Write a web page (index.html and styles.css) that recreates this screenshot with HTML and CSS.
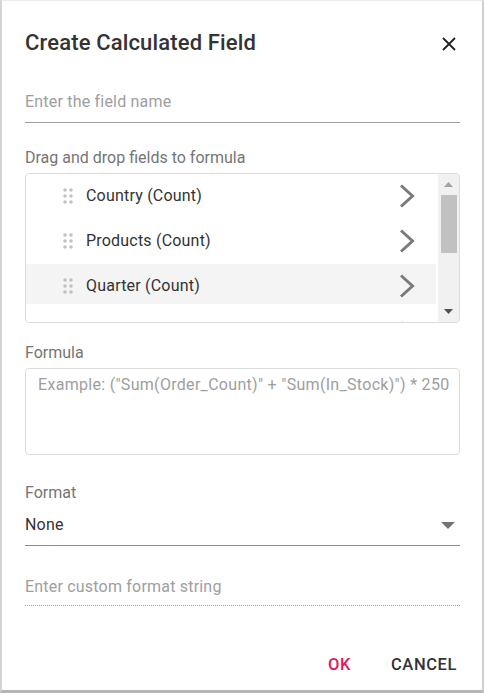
FILE: index.html
```html
<!DOCTYPE html>
<html>
<head>
<meta charset="utf-8">
<link rel="stylesheet" href="styles.css">
</head>
<body>
<div class="dialog">
  <div class="header">
    <div class="title">Create Calculated Field</div>
    <svg class="close" width="14" height="14" viewBox="0 0 14 14"><path d="M1 1L13 13M13 1L1 13" stroke="#212121" stroke-width="1.8" fill="none"/></svg>
  </div>
  <div class="field name-field"><span class="placeholder">Enter the field name</span></div>
  <div class="label drag-label">Drag and drop fields to formula</div>
  <div class="listbox">
    <div class="list">
      <div class="item"><svg class="grip" width="10" height="16" viewBox="0 0 10 16"><g fill="#c2c2c2"><circle cx="2" cy="2" r="1.8"/><circle cx="8" cy="2" r="1.8"/><circle cx="2" cy="8" r="1.8"/><circle cx="8" cy="8" r="1.8"/><circle cx="2" cy="14" r="1.8"/><circle cx="8" cy="14" r="1.8"/></g></svg><span class="item-text">Country (Count)</span><svg class="chev" width="16" height="24" viewBox="0 0 16 24"><path d="M2 1.5L13.5 12L2 22.5" stroke="#7a7a7a" stroke-width="3" fill="none"/></svg></div>
      <div class="item"><svg class="grip" width="10" height="16" viewBox="0 0 10 16"><g fill="#c2c2c2"><circle cx="2" cy="2" r="1.8"/><circle cx="8" cy="2" r="1.8"/><circle cx="2" cy="8" r="1.8"/><circle cx="8" cy="8" r="1.8"/><circle cx="2" cy="14" r="1.8"/><circle cx="8" cy="14" r="1.8"/></g></svg><span class="item-text">Products (Count)</span><svg class="chev" width="16" height="24" viewBox="0 0 16 24"><path d="M2 1.5L13.5 12L2 22.5" stroke="#7a7a7a" stroke-width="3" fill="none"/></svg></div>
      <div class="item hover"><svg class="grip" width="10" height="16" viewBox="0 0 10 16"><g fill="#c2c2c2"><circle cx="2" cy="2" r="1.8"/><circle cx="8" cy="2" r="1.8"/><circle cx="2" cy="8" r="1.8"/><circle cx="8" cy="8" r="1.8"/><circle cx="2" cy="14" r="1.8"/><circle cx="8" cy="14" r="1.8"/></g></svg><span class="item-text">Quarter (Count)</span><svg class="chev" width="16" height="24" viewBox="0 0 16 24"><path d="M2 1.5L13.5 12L2 22.5" stroke="#7a7a7a" stroke-width="3" fill="none"/></svg></div>
      <div class="item partial"><span class="item-text"></span><svg class="chev" width="16" height="24" viewBox="0 0 16 24"><path d="M2 1.5L13.5 12L2 22.5" stroke="#7a7a7a" stroke-width="3" fill="none"/></svg></div>
    </div>
    <div class="scrollbar">
      <svg class="arrow" width="9" height="5" viewBox="0 0 9 5"><path d="M0 5L4.5 0L9 5Z" fill="#a3a3a3"/></svg>
      <div class="thumb"></div>
      <div class="spacer"></div>
      <svg class="arrow" width="9" height="5" viewBox="0 0 9 5"><path d="M0 0L4.5 5L9 0Z" fill="#505050"/></svg>
    </div>
  </div>
  <div class="label formula-label">Formula</div>
  <div class="textarea"><span class="placeholder">Example: ("Sum(Order_Count)" + "Sum(In_Stock)") * 250</span></div>
  <div class="label format-label">Format</div>
  <div class="field select-field"><span class="value">None</span><svg class="caret" width="14" height="7" viewBox="0 0 14 7"><path d="M0 0L7 7L14 0Z" fill="#757575"/></svg></div>
  <div class="field custom-field"><span class="placeholder">Enter custom format string</span></div>
  <div class="footer">
    <span class="btn ok">OK</span>
    <span class="btn cancel">CANCEL</span>
  </div>
</div>
</body>
</html>
```

FILE: styles.css
```css
* { box-sizing: border-box; }
html, body { margin: 0; padding: 0; background: #fff; }
body { font-family: Roboto, "Liberation Sans", sans-serif; }
.dialog {
  width: 484px;
  height: 693px;
  border-top: 1px solid #ebebeb;
  border-left: 2px solid #d4d4d4;
  border-right: 2px solid #cfcfcf;
  border-bottom: 3px solid #b5b5b5;
  padding: 0 22px 0 23px;
  background: #fff;
  display: flex;
  flex-direction: column;
}
.header {
  display: flex;
  align-items: center;
  justify-content: space-between;
  padding-top: 29px;
  height: 55px;
}
.title {
  font-size: 22px;
  line-height: 26px;
  font-weight: 500;
  letter-spacing: 0.15px;
  color: #333;
}
.close { margin-right: 4px; margin-top: 1px; }
.placeholder { color: #9e9e9e; }
.field {
  font-size: 16px;
  line-height: 20px;
  letter-spacing: 0.2px;
  display: flex;
  align-items: center;
  justify-content: space-between;
}
.name-field {
  margin-top: 36px;
  padding-bottom: 10px;
  border-bottom: 1px solid #9e9e9e;
}
.label {
  font-size: 16px;
  line-height: 20px;
  color: #757575;
}
.drag-label { margin-top: 25px; }
.listbox {
  margin-top: 5px;
  height: 150px;
  border: 1px solid #dcdcdc;
  border-radius: 4px;
  display: flex;
  overflow: hidden;
}
.list {
  flex: 1;
  overflow: hidden;
  padding-right: 2px;
}
.item {
  height: 40px;
  margin-bottom: 5px;
  display: flex;
  align-items: center;
  padding-left: 37px;
  padding-top: 3px;
}
.item.partial { padding-top: 7px; }
.item.hover { background: #f4f4f4; }
.grip { margin-right: 13px; }
.item-text {
  flex: 1;
  font-size: 16px;
  letter-spacing: 0.2px;
  color: #333;
}
.chev { margin-right: 21px; }
.scrollbar {
  width: 21px;
  background: #f1f1f1;
  display: flex;
  flex-direction: column;
  align-items: center;
  padding: 8px 0 8px;
}
.arrow { display: block; flex: none; }
.thumb {
  width: 16px;
  height: 58px;
  margin-top: 8px;
  background: #c1c1c1;
  flex: none;
}
.spacer { flex: 1; }
.formula-label { margin-top: 20px; }
.textarea {
  margin-top: 5px;
  height: 87px;
  border: 1px solid #dcdcdc;
  border-radius: 4px;
  padding: 6px 0 6px 12px;
  font-size: 16px;
  line-height: 20px;
  letter-spacing: 0.3px;
  white-space: nowrap;
  overflow: hidden;
}
.format-label { margin-top: 28px; }
.select-field {
  margin-top: 12px;
  padding-bottom: 10px;
  border-bottom: 1px solid #8c8c8c;
  color: #333;
}
.caret { margin-right: 5px; margin-top: 1px; }
.custom-field {
  margin-top: 31px;
  padding-bottom: 8px;
  border-bottom: 1px dotted #9e9e9e;
}
.footer {
  margin-top: auto;
  margin-bottom: 15px;
  display: flex;
  justify-content: flex-end;
  align-items: center;
  gap: 40px;
  padding-right: 3px;
}
.btn {
  font-size: 16.5px;
  line-height: 20px;
  font-weight: 500;
  letter-spacing: 0.6px;
}
.ok { color: #e3165b; }
.cancel { color: #333; }
```
